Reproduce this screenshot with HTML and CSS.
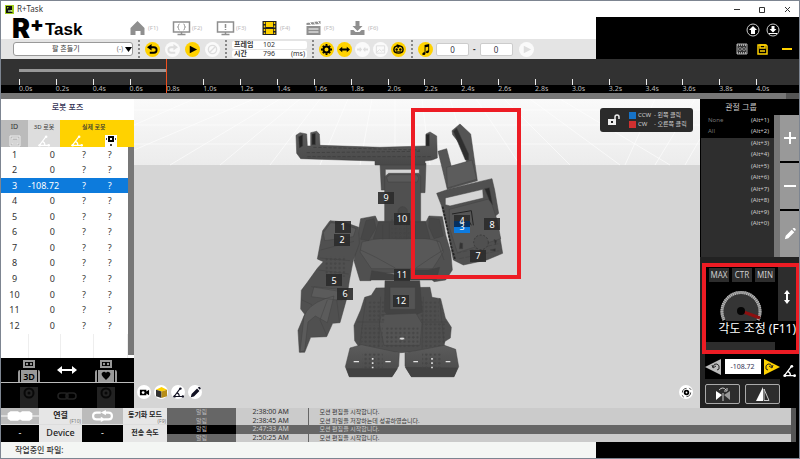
FILE: index.html
```html
<!DOCTYPE html>
<html lang="ko">
<head>
    <meta charset="UTF-8">
    <title>R+Task</title>
    <link rel="stylesheet" href="styles.css">
</head>
<body>
    <!-- shared icons -->
    <svg class="defs" width="0" height="0">
        <symbol id="i-angle" viewBox="0 0 14 14"><path d="M9.500 1.500L1.500 12H13M5 7.500Q8 8.500 8 12" fill="none" stroke="currentColor" stroke-width="1.400"/><circle cx="9.500" cy="2" r="1.500" fill="currentColor"/><circle cx="12.500" cy="12" r="1.500" fill="currentColor"/><circle cx="2" cy="12" r="1.500" fill="currentColor"/></symbol>
        <symbol id="i-pencil" viewBox="0 0 14 14"><path d="M1 13l1-4 7-7 3 3-7 7zM10 1l1-1q1-.5 2 .5t.500 2l-1 1z" fill="currentColor"/></symbol>
        <symbol id="i-robot" viewBox="0 0 24 22"><path d="M6 0h12v8H6zM1 12q0-2 2-2v12H1zM4 10h16v12H4zM21 10q2 0 2 2v10h-2z" fill="#999"/><path d="M8 2h8v4H8z" fill="#000"/><circle cx="10" cy="4" r="1.200" fill="#999"/><circle cx="14" cy="4" r="1.200" fill="#999"/></symbol>
        <symbol id="i-device" viewBox="0 0 18 22"><rect x="0" y="1" width="18" height="21" fill="#222"/><circle cx="9" cy="7" r="4.500" fill="#222" stroke="#080808" stroke-width="2"/><circle cx="9" cy="7" r="1.500" fill="#080808"/></symbol>
        <symbol id="i-gear" viewBox="0 0 12 12"><circle cx="6" cy="6" r="3.300" fill="none" stroke="currentColor" stroke-width="2.200"/><path d="M6 0v2M6 10v2M0 6h2M10 6h2M2 2l1 1M9 9l1 1M10 2L9 3M3 9l-1 1" stroke="currentColor" stroke-width="2"/></symbol>
        <symbol id="i-turn" viewBox="0 0 12 12"><path d="M3 3.500h4.500q3 0 3 3t-3 3H3" fill="none" stroke="currentColor" stroke-width="2"/><path d="M0 3.500L5 0v7z" fill="currentColor"/></symbol>
    </svg>

    <div class="titlebar">
        <svg class="app-icon" viewBox="0 0 9 9"><path d="M0 0h9v9H0z" fill="#a3cf1d"/><path d="M1 1h6v4L5 5l3 3H1zM2 2v2l2-2z" fill="#111"/><path d="M3 6h4" stroke="#dfd"/></svg>
        <span>R+Task</span>
        <div class="window-buttons">
            <button aria-label="Minimize"><svg viewBox="0 0 7 7"><path d="M0 3.500h6" stroke="#333"/></svg></button>
            <button aria-label="Maximize"><svg viewBox="0 0 7 7"><path d="M.5 1.500h5v5h-5z" fill="none" stroke="#333"/></svg></button>
            <button aria-label="Close"><svg viewBox="0 0 7 7"><path d="M1 1l5 5M6 1L1 6" stroke="#333"/></svg></button>
        </div>
    </div>

    <header class="header">
        <div class="header-main">
            <div class="menu">
                <h1 class="logo"><span class="logo-r">R</span><span class="logo-plus">+</span><span class="logo-task">Task</span></h1>
                <nav class="nav">
                    <button><svg viewBox="0 0 18 16"><path d="M9 1l7 7v7h-4v-4H7v4H2V8z" fill="#8f8f8f"/></svg>(F1)</button>
                    <button><svg viewBox="0 0 18 16"><path d="M1 2h16v10H1zM5 14.500h8M9 12v3" fill="none" stroke="#8f8f8f" stroke-width="1.500"/><path d="M7 4q-1 0-1 1.500T5 7q1 0 1 1.500T7 10M11 4q1 0 1 1.500T13 7q-1 0-1 1.500T11 10" fill="none" stroke="#8f8f8f"/></svg>(F2)</button>
                    <button><svg viewBox="0 0 18 16"><path d="M1 2h16v10H1zM5 14.500h8M9 12v3" fill="none" stroke="#8f8f8f" stroke-width="1.500"/><path d="M9 4v4M9 9v1" stroke="#8f8f8f" stroke-width="1.500"/></svg>(F3)</button>
                    <button><svg viewBox="0 0 18 16"><path d="M2 1h14v14H2z" fill="#222"/><path d="M5.500 2h7v5h-7zM5.500 9h7v5h-7z" fill="#ffd200"/><path d="M4 2v12M14 2v12" stroke="#ffd200" stroke-width="1.500" stroke-dasharray="2 1.500"/></svg>(F4)</button>
                    <button><svg viewBox="0 0 18 16"><path d="M2 3l14-2v3L2 5zM2 6h14v9H2z" fill="#8f8f8f"/><path d="M5 2l2 3M9 1.500l2 3M13 1l2 3M4 9h10M4 12h10" stroke="#fff"/></svg>(F5)</button>
                    <button><svg viewBox="0 0 18 16"><path d="M7 1h4v5h3l-5 5-5-5h3z" fill="#8f8f8f"/><path d="M2 10h3l2 2h4l2-2h3v5H2z" fill="#8f8f8f"/></svg>(F6)</button>
                </nav>
            </div>
            <div class="toolbar">
                <div class="motion">
                    <select aria-label="모션"><option>팔 흔들기</option></select>
                    <span class="motion-mark">(-)&nbsp;<svg viewBox="0 0 7 5"><path d="M0 0h7L3.500 5z"/></svg></span>
                </div>
                <i class="sep"></i>
                <div class="group wide">
                    <button class="round on" aria-label="Undo"><svg viewBox="0 0 12 12"><use href="#i-turn"/></svg></button>
                    <button class="round" aria-label="Redo"><svg class="flip" viewBox="0 0 12 12"><use href="#i-turn"/></svg></button>
                    <button class="round on" aria-label="Play"><svg viewBox="0 0 12 12"><path d="M3 2l8 4-8 4z"/></svg></button>
                    <button class="round" aria-label="Stop"><svg viewBox="0 0 12 12"><circle cx="6" cy="6" r="4.500" fill="none" stroke="#ddd" stroke-width="1.500"/><path d="M3 9l6-6" stroke="#ddd" stroke-width="1.500"/></svg></button>
                </div>
                <i class="sep"></i>
                <div class="frame-info">
                    <div><b>프레임</b><span>102</span></div>
                    <div><b>시간</b><span>796</span><span>(ms)</span></div>
                </div>
                <i class="sep"></i>
                <div class="group">
                    <button class="round on" aria-label="Settings"><svg viewBox="0 0 12 12"><use href="#i-gear"/></svg></button>
                    <button class="round on" aria-label="Stretch"><svg viewBox="0 0 12 12"><path d="M0 6l3.500-3v2h5V3L12 6 8.500 9V7h-5v2z"/></svg></button>
                    <button class="round" aria-label="Shrink"><svg viewBox="0 0 12 12"><path d="M0 5h3V3l2.500 3L3 9V7H0zM12 5H9V3L6.500 6 9 9V7h3z" fill="#ddd"/></svg></button>
                    <button class="round" aria-label="Image"><svg viewBox="0 0 12 12"><path d="M1.500 2h9v8h-9zM2 9l3-3 2 2 2-2 1 2" fill="none" stroke="#ddd"/></svg></button>
                    <button class="round on" aria-label="Robot"><svg viewBox="0 0 12 12"><path d="M1 6q0-4 5-4t5 4-5 4-5-4M4 1l3 1-2 2" fill="none" stroke="#000" stroke-width="1.500"/><circle cx="4" cy="6" r="1.300"/><circle cx="8" cy="6" r="1.300"/><path d="M3 8.500h6" stroke="#000"/></svg></button>
                </div>
                <i class="sep"></i>
                <div class="range">
                    <button class="round on" aria-label="Music"><svg viewBox="0 0 12 12"><path d="M5 1l5-1v8q0 2-2 2T6.500 8.500 9 7V3L6 3.500V10q0 2-2 2t-1.500-1.500T5 9z"/></svg></button>
                    <input type="text" value="0" aria-label="Start">
                    <b>-</b>
                    <input type="text" value="0" aria-label="End">
                    <button class="round" aria-label="Play music"><svg viewBox="0 0 12 12"><path d="M3 2l8 4-8 4z" fill="#ddd"/></svg></button>
                </div>
            </div>
        </div>
        <div class="header-side">
            <div>
                <button aria-label="Upload"><svg viewBox="0 0 14 14"><circle cx="7" cy="7" r="6" fill="none" stroke="#ccc"/><path d="M7 3l4 4H9v4H5V7H3z" fill="#fff"/></svg></button>
                <button aria-label="Download"><svg viewBox="0 0 14 14"><circle cx="7" cy="7" r="6" fill="none" stroke="#ccc"/><path d="M5.500 3h3v3h2L7 9.500 3.500 6h2zM3 10h8v1H3z" fill="#fff"/></svg></button>
            </div>
            <div class="save-row">
                <button aria-label="Export"><svg viewBox="0 0 14 14"><path d="M2 2h10v10H2z" fill="#333" stroke="#aaa"/><path d="M2 3h10M2 11h10" stroke="#aaa" stroke-width="2" stroke-dasharray="1 1"/><circle cx="5" cy="7" r="1.500" fill="none" stroke="#888"/><circle cx="9" cy="7" r="1.500" fill="none" stroke="#888"/></svg></button>
                <button aria-label="Save"><svg viewBox="0 0 14 14"><path d="M3 3h8l1 1v8H3z" fill="none" stroke="#ffd200" stroke-width="1.500"/><path d="M5 3h5v3H5zM5 9h5" stroke="#ffd200" stroke-width="1.500" fill="none"/></svg></button>
                <button aria-label="Collapse"><svg viewBox="0 0 14 14"><path d="M2 7h10" stroke="#ffd200" stroke-width="2"/></svg></button>
            </div>
        </div>
    </header>

    <section class="timeline">
        <div class="track"><div class="clip"></div></div>
        <ol class="ruler">
            <li>0.0s</li><li>0.2s</li><li>0.4s</li><li>0.6s</li><li class="now">0.8s</li><li>1.0s</li><li>1.2s</li>
            <li>1.4s</li><li>1.6s</li><li>1.8s</li><li>2.0s</li><li>2.2s</li><li>2.4s</li><li>2.6s</li>
            <li>2.8s</li><li>3.0s</li><li>3.2s</li><li>3.4s</li><li>3.6s</li><li>3.8s</li><li>4.0s</li>
        </ol>
        <div class="timeline-scroll"></div>
    </section>

    <main class="main">
        <section class="pose">
            <h2>로봇 포즈</h2>
            <div class="pose-body">
                <table class="pose-table">
                    <thead>
                        <tr><th class="c-id">ID</th><th class="c-3d">3D 로봇</th><th class="c-real" colspan="2">실제 로봇</th></tr>
                        <tr>
                            <th class="c-id"><svg viewBox="0 0 12 12"><path d="M1 1h10v10H1zM3 3h6v6H3zM5 5v3M7 5v3" fill="none" stroke="#eee"/></svg></th>
                            <th class="c-3d"><svg viewBox="0 0 14 14"><use href="#i-angle"/></svg></th>
                            <th class="c-real"><svg viewBox="0 0 14 14"><use href="#i-angle"/></svg></th>
                            <th class="c-real"><svg viewBox="0 0 12 12"><path d="M0 0h12v12H0z" fill="#fff"/><path d="M4 2h4v4H4z" fill="none" stroke="#000" stroke-width="2"/><path d="M1 4h1M10 4h1M5 10h2" stroke="#000" stroke-width="1.500"/></svg></th>
                        </tr>
                    </thead>
                    <tbody>
                        <tr><td>1</td><td>0</td><td>?</td><td>?</td></tr>
                        <tr><td>2</td><td>0</td><td>?</td><td>?</td></tr>
                        <tr class="selected"><td>3</td><td>-108.72</td><td>?</td><td>?</td></tr>
                        <tr><td>4</td><td>0</td><td>?</td><td>?</td></tr>
                        <tr><td>5</td><td>0</td><td>?</td><td>?</td></tr>
                        <tr><td>6</td><td>0</td><td>?</td><td>?</td></tr>
                        <tr><td>7</td><td>0</td><td>?</td><td>?</td></tr>
                        <tr><td>8</td><td>0</td><td>?</td><td>?</td></tr>
                        <tr><td>9</td><td>0</td><td>?</td><td>?</td></tr>
                        <tr><td>10</td><td>0</td><td>?</td><td>?</td></tr>
                        <tr><td>11</td><td>0</td><td>?</td><td>?</td></tr>
                        <tr><td>12</td><td>0</td><td>?</td><td>?</td></tr>
                        <tr class="blank"><td></td><td></td><td></td><td></td></tr>
                    </tbody>
                </table>
                <div class="pose-scroll"></div>
            </div>
            <div class="sync">
                <svg class="robot-icon" viewBox="0 0 24 22"><use href="#i-robot"/><text x="12" y="20" text-anchor="middle">3D</text></svg>
                <svg class="arrow-icon" viewBox="0 0 20 10"><path d="M0 5l5-4v3h10V1l5 4-5 4V6H5v3z" fill="#fff"/></svg>
                <svg class="robot-icon" viewBox="0 0 24 22"><use href="#i-robot"/><path d="M12 20q-7-6-3-8 2-1 3 1 1-2 3-1 4 2-3 8" fill="#000"/></svg>
            </div>
            <div class="sync">
                <svg class="robot-icon" viewBox="0 0 18 22"><use href="#i-device"/></svg>
                <svg class="arrow-icon" viewBox="0 0 20 10"><rect x="1" y="2" width="10" height="6" rx="3" fill="none" stroke="#222" stroke-width="1.500"/><rect x="9" y="2" width="10" height="6" rx="3" fill="none" stroke="#222" stroke-width="1.500"/></svg>
                <svg class="robot-icon" viewBox="0 0 18 22"><use href="#i-device"/></svg>
            </div>
        </section>

        <section class="scene">
            <svg class="scene-canvas" viewBox="134 99 566 309" preserveAspectRatio="xMidYMid slice">
                <defs>
                    <linearGradient id="sky" x2="0" y2="1"><stop offset="0" stop-color="#fafafa"/><stop offset="1" stop-color="#ececec"/></linearGradient>
                    <linearGradient id="steel" x2="0" y2="1"><stop offset="0" stop-color="#5c5c5c"/><stop offset="1" stop-color="#484848"/></linearGradient>
                    <pattern id="holes" width="13" height="13" patternUnits="userSpaceOnUse"><circle cx="6" cy="6" r="3" fill="#474747" stroke="#3a3a3a" stroke-width="1"/></pattern>
                </defs>
                <path d="M134 99h566v66H134z" fill="url(#sky)"/>
                <path d="M134 165h566v243H134z" fill="#d5d5d5"/>
                <path d="M134 125l60-26M134 150l120-51M170 165l110-66M220 165l80-66M270 165l50-66M320 165l28-66M360 165l12-66M395 165v-66M430 165l-8-66M470 165l-20-66M520 165l-44-66M570 165l-66-66M620 165l-90-66M670 165l-110-66M625 165l30-66M655 165l40-66M685 165l15-26M134 110h566M134 125h566M134 144h566" stroke="#fff" stroke-opacity=".6" fill="none"/>

                <!-- robot body, drawn at three times the size -->
                <g transform="translate(290 110) scale(.33333)" stroke="#414141" stroke-width="1.500" stroke-linejoin="round">
                    <!-- arm bracket and head -->
                    <path fill="#505050" d="M270 160h138l-3 88h-17v-70H286v62h-12z"/>
                    <path fill="url(#steel)" d="M18 76l12-8 20 4 2 36h10V68l18-4 8 8 2 34 180 6 138-4V72l12-6 20 12 2 66-16 6-21 3v12H255v-12L32 146l-12-16z"/>
                    <path fill="#252525" d="M26 80l12-6v34l-10 6zM66 72l10-2v34h-10zM408 74l10-2v36h-10z"/>
                    <path d="M50 128l340-4M52 140h370M70 112l320 8" fill="none" stroke="#333" stroke-dasharray="10 5"/>
                    <path fill="#505050" d="M284 200l12-10h90l6 10v140H284z"/>
                    <path fill="#5a5a5a" d="M290 202l10-8h80l6 10-4 12h-88z"/>
                    <!-- torso -->
                    <path fill="#505050" d="M212 326l44-8 7 16h146l8-16 40 2 10 55 15 50 5 55-20 30-35 5-25-25H260l-18 22h-32l-18-60 8-60z"/>
                    <path fill="#585858" d="M216 396q60-16 104-10h30q60-6 100 10l10 30-32 50H244l-34-50z"/>
                    <path fill="#474747" d="M228 332l24-6 6 28-22 38-24-4zM418 324l30 4 12 50-28 8-16-36zM266 336h140l14 50H250z"/>
                    <path fill="#424242" d="M245 482l76 12v-14h94l34-8-10 38H240z"/>
                    <path d="M278 344v44M298 340v46M350 340v46M376 344v42M212 420l42 20 62 34M460 420l-38 24-44 30M440 390l22 60" fill="none"/>
                    <circle cx="338" cy="304" r="14" fill="#484848"/>
                    <path fill="url(#holes)" stroke="none" d="M304 320h64v64h-64z"/>
                    <!-- left arm -->
                    <path fill="#505050" d="M98 362l22-30 42 4 44 16 2 50-18 48-12 62-8 54-20 72-22 2-18 40-48 2-18 45h-16l-4-66 20-48-12-16 2-56 18-24 30-42 18-20-18-8 8-42z"/>
                    <path fill="#5b5b5b" d="M100 368l22-30 36 4 40 14-8 24-86 12zM72 530l90 10-6 32-92-12zM42 620q10-34 64-54l26-8-20 80-36-20-22 18-10 86-14 4z"/>
                    <path d="M92 420l100-26M90 444l90 8M86 480l90 12M64 530l96 16M36 570l30 14M112 570l-22 60 20 46M140 568l8 66" fill="none"/>
                    <path fill="url(#holes)" stroke="none" d="M106 440h60v60h-60z"/>
                    <!-- raised right arm -->
                    <path fill="#555" d="M486 62l24-20 32 30 20 140-90 26-14-58-14-56 26-8 14 54 46-10-4-38-38-48z"/>
                    <path fill="#2f2f2f" d="M490 64l10-10 36 78v18h-10z"/>
                    <path fill="#5c5c5c" d="M470 172l76-22 14 58-88 26z"/>
                    <path fill="#505050" d="M440 250l40-14 126-30 8 34 12 70-14 12 18 60 8 48-48 20-70 15-30-15-18-90-18-74z"/>
                    <path fill="#565656" d="M478 298l122-32 22 66 10 54-130 42-24-76z"/>
                    <path fill="#d5d5d5" d="M466 264l112-26 2 26-100 24-14-4z"/>
                    <path fill="#292929" d="M584 236l14-3 10 52-10-14z"/>
                    <path d="M458 290l26 120 12 40" fill="none" stroke="#222" stroke-width="5" stroke-dasharray="7 4"/>
                    <path d="M486 312l58-10 6 44M530 320l14 26" fill="none" stroke="#222" stroke-width="3"/>
                    <path d="M500 430l130-30M508 446l120-24" fill="none" stroke-dasharray="14 5"/>
                    <circle cx="573" cy="397" r="22" fill="#505050" stroke="#303030" stroke-width="2" stroke-dasharray="6 5"/>
                    <path fill="#333" d="M510 398l8 2v16h-10zM612 388l8 4-4 12zM600 420l16-4v8z"/>
                    <!-- waist and legs -->
                    <path fill="#4e4e4e" d="M258 534l162-2 6 30 26 4 14 58 18 28-3 32-16 10-8 24-125 10-120-10-18-26-2-46 20-46 12-38 20-6z"/>
                    <path fill="#434343" d="M285 512h104l8 94-28 12h-74l-12-14z"/>
                    <path fill="#545454" d="M300 532h76v66h-76zM274 614l104-4 18 30-6 66H282l-14-66z"/>
                    <path fill="url(#holes)" stroke="none" d="M230 574h56v58h-56zM390 574h56v58h-56zM214 646h64v66h-64zM286 652h100v60H286zM398 640h68v74h-68z"/>
                    <path d="M228 564l-20 150M448 564l16 150M272 560l-6 150M400 560l-4 156M202 636h80M394 636h76" fill="none"/>
                    <ellipse cx="336" cy="686" rx="8" ry="4" fill="#ddd"/>
                    <!-- feet -->
                    <path fill="url(#steel)" d="M180 714l34-10 114 24-2 40-20 32H178l-12-30zM345 728l118-22 34 12 9 52-14 30H364l-19-32z"/>
                    <path fill="#424242" d="M170 776h152l-16 24H178zM346 772l156 2-10 26H364z"/>
                    <path fill="url(#holes)" stroke="none" d="M218 730h60v46h-60zM396 730h60v46h-60z"/>
                    <path d="M191 755h16M286 755h16M370 755h14M467 755h14" stroke="#e2e2e2" stroke-width="4"/>
                    <path d="M248 744v34M426 744v34" stroke="#e2e2e2" stroke-width="5" stroke-dasharray="5 8"/>
                </g>

                <!-- joint numbers -->
                <g class="joints">
                    <path d="M335 221h16v12h-16zM334 234h16v12h-16zM326 274h16v12h-16zM337 288h16v12h-16zM378 192h16v12h-16zM394 213h16v12h-16zM394 269h16v12h-16zM393 295h16v12h-16zM454 215h16v12h-16zM484 218h16v12h-16zM470 250h16v12h-16z" fill="#2b2b2b" fill-opacity=".9"/>
                    <path d="M454 221h16v6h-16z" fill="#06305f"/>
                    <path d="M454 227h16v6h-16z" fill="#0d7be0"/>
                    <text x="343" y="230">1</text><text x="342" y="243">2</text><text x="462" y="230">3</text><text x="462" y="224">4</text>
                    <text x="334" y="284">5</text><text x="345" y="297">6</text><text x="478" y="259">7</text><text x="492" y="228">8</text>
                    <text x="386" y="201">9</text><text x="402" y="222">10</text><text x="402" y="278">11</text><text x="401" y="304">12</text>
                </g>
                <rect x="413" y="110" width="106" height="167" fill="none" stroke="#ed1c24" stroke-width="4"/>
            </svg>
            <div class="legend">
                <svg viewBox="0 0 12 12"><path d="M0 5h8v6H0z" fill="#eee"/><path d="M7 5V3q0-2 2-2t2 2v2" fill="none" stroke="#eee" stroke-width="1.500"/><path d="M4 7v2" stroke="#222" stroke-width="2"/></svg>
                <ul>
                    <li><i class="ccw"></i><span>CCW</span>- 왼쪽 클릭</li>
                    <li><i class="cw"></i><span>CW</span>- 오른쪽 클릭</li>
                </ul>
            </div>
            <div class="scene-tools">
                <button aria-label="Camera"><svg viewBox="0 0 12 12"><path d="M1 3h7v6H1zM8 5l3-2v6L8 7z"/><circle cx="4.500" cy="6" r="1.500" fill="#fff"/></svg></button>
                <button aria-label="Cube"><svg viewBox="0 0 12 12"><path d="M0 3l6-3 6 3-6 2z" fill="#ffd200"/><path d="M0 3l6 2v7l-6-2z" fill="#333"/><path d="M12 3L6 5v7l6-2z" fill="#b68d18"/></svg></button>
                <button aria-label="Angle"><svg viewBox="0 0 14 14"><use href="#i-angle"/></svg></button>
                <button aria-label="Edit"><svg viewBox="0 0 14 14"><use href="#i-pencil"/></svg></button>
                <button class="last" aria-label="View"><svg viewBox="0 0 12 12"><circle cx="6" cy="6" r="2" fill="none" stroke="#000" stroke-width="2"/><path d="M1.500 6q0-4 4.500-4.500M10.500 6q0 4-4.500 4.500M9 1l2 2M1 9l2 2" fill="none" stroke="#333"/></svg></button>
            </div>
        </section>

        <aside class="side">
            <h2>관절 그룹</h2>
            <div class="joint-group">
                <ul class="joint-list">
                    <li class="used">None<span>(Alt+1)</span></li>
                    <li class="used">All<span>(Alt+2)</span></li>
                    <li><span>(Alt+3)</span></li>
                    <li><span>(Alt+4)</span></li>
                    <li><span>(Alt+5)</span></li>
                    <li><span>(Alt+6)</span></li>
                    <li><span>(Alt+7)</span></li>
                    <li><span>(Alt+8)</span></li>
                    <li><span>(Alt+9)</span></li>
                    <li><span>(Alt+0)</span></li>
                </ul>
                <div class="group-scroll"></div>
                <div class="group-buttons">
                    <button aria-label="Add"><svg viewBox="0 0 12 12"><path d="M6 0v12M0 6h12" stroke="#fff" stroke-width="2"/></svg></button>
                    <button aria-label="Remove"><svg viewBox="0 0 12 12"><path d="M0 6h12" stroke="#fff" stroke-width="2"/></svg></button>
                    <button aria-label="Edit group"><svg viewBox="0 0 14 14"><use href="#i-pencil"/></svg></button>
                </div>
            </div>
            <div class="control">
                <div class="dial-panel">
                    <div class="dial-left">
                        <div class="limits"><button>MAX</button><button>CTR</button><button>MIN</button></div>
                        <svg class="dial" viewBox="0 0 42 32">
                            <circle cx="21" cy="21" r="18" fill="#353535"/>
                            <path d="M4 30A19 19 0 1 1 38 30" fill="none" stroke="#777" stroke-width="3"/>
                            <path d="M4 30A19 19 0 1 1 38 30" fill="none" stroke="#bbb" stroke-width="3" stroke-dasharray="1 1"/>
                            <path d="M21 21l19 7" stroke="#8c1010" stroke-width="3"/>
                            <circle cx="21" cy="21" r="4" fill="#050505"/>
                        </svg>
                        <div class="bar"></div>
                    </div>
                    <button class="slide" aria-label="Range"><svg viewBox="0 0 8 14"><path d="M4 0l3 4H5v6h2l-3 4-3-4h2V4H1z" fill="#fff"/></svg></button>
                    <div class="tip">각도 조정 (F11)</div>
                </div>
                <div class="adjust">
                    <div class="adjust-left">
                        <div class="stepper">
                            <button aria-label="Rotate left"><svg viewBox="0 0 16 16"><path d="M0 8l16-8v16z" fill="#bbb"/><path d="M8 8q1-4 4-3t2 5l-2 1M7 6l1 3 3-2" fill="none" stroke="#222"/></svg></button>
                            <input type="text" value="-108.72" aria-label="각도">
                            <button aria-label="Rotate right"><svg viewBox="0 0 16 16"><path d="M0 0l16 8-16 8z" fill="#ffd200"/><path d="M8 8q-1-4-4-3t-2 5l2 1M9 6L8 9 5 7" fill="none" stroke="#222"/></svg></button>
                        </div>
                        <div class="mirrors">
                            <button aria-label="Mirror"><svg viewBox="0 0 16 14"><path d="M1 4l6 4-6 5z" fill="#fff"/><path d="M15 4L9 8l6 5z" fill="#999"/><path d="M4 3q4-4 7 0M8 6v8M12 1v3H9" fill="none" stroke="#ccc"/></svg></button>
                            <button aria-label="Flip"><svg viewBox="0 0 16 14"><path d="M8 0v14H1z" fill="#fff"/><path d="M9 2l5 11.500H9z" fill="none" stroke="#ccc"/></svg></button>
                        </div>
                    </div>
                    <svg class="adjust-icon" viewBox="0 0 14 14"><use href="#i-angle"/></svg>
                </div>
            </div>
        </aside>
    </main>

    <section class="bottom">
        <div class="status">
            <div class="pic"><svg viewBox="0 0 40 12"><path d="M0 6h40" stroke="#fff"/><path d="M7 3l3-2h8l1 1h2l1-1h8l3 2v6l-3 2h-8l-1-1h-2l-1 1h-8L7 9z" fill="#fff"/></svg></div>
            <button>연결<small>(F10)</small></button>
            <div class="pic"><svg viewBox="0 0 40 14"><path d="M18 3h-5q-4 0-4 4t4 4h6M23 3h4q4 0 4 4t-4 4h-5" fill="none" stroke="#fff" stroke-width="2.500"/><path d="M24 0v6l-6-3zM18 8v6l6-3z" fill="#fff"/></svg></div>
            <button class="small">동기화 모드<small>(F9)</small></button>
            <div class="value">-</div>
            <div class="name">Device</div>
            <div class="value">-</div>
            <div class="name small">전송 속도</div>
        </div>
        <table class="log">
            <tr><td>알림</td><td>2:38:00 AM</td><td>모션 편집을 시작합니다.</td></tr>
            <tr><td>알림</td><td>2:38:45 AM</td><td>모션 파일을 저장하는데 성공하였습니다.</td></tr>
            <tr class="active"><td>알림</td><td>2:47:33 AM</td><td>모션 편집을 시작합니다.</td></tr>
            <tr><td>알림</td><td>2:50:25 AM</td><td>모션 편집을 시작합니다.</td></tr>
        </table>
        <div class="log-scroll"></div>
    </section>

    <footer class="footer"><span>작업중인 파일:</span></footer>
</body>
</html>
```
FILE: styles.css
```css
* {
    box-sizing: border-box;
}
body {
    margin: 0;
    min-height: 100vh;
    display: flex;
    flex-direction: column;
    border: 1px solid #7d8591;
    background-color: #000;
    color: #333;
    font-family: "Noto Sans", "Noto Sans CJK KR", sans-serif;
    font-size: 8px;
    line-height: 10px;
}
h1, h2, ul, ol {
    margin: 0;
    padding: 0;
    list-style: none;
}
button, input, select {
    margin: 0;
    padding: 0;
    border: 0;
    background: none;
    color: inherit;
    font: inherit;
}
svg {
    display: block;
    flex: none;
}
.defs {
    position: absolute;
}

/* title bar */
.titlebar {
    display: flex;
    align-items: center;
    height: 16px;
    padding: 0 8px 0 4px;
    gap: 3px;
    background-color: #fff;
}
.app-icon {
    width: 9px;
    height: 9px;
}
.window-buttons {
    display: flex;
    gap: 18px;
    margin-left: auto;
}
.window-buttons svg {
    width: 7px;
    height: 7px;
}

/* header */
.header {
    display: flex;
    height: 42px;
}
.header-main {
    flex: 1;
    background-color: #fff;
}
.menu {
    display: flex;
    height: 22px;
}
.logo {
    display: flex;
    width: 127px;
    padding-left: 11px;
    color: #000;
    font-family: "Liberation Sans", Arial, sans-serif;
    font-size: 17px;
    line-height: 26px;
}
.logo-r {
    font-family: Inter, sans-serif;
    font-size: 27px;
    font-weight: 900;
    line-height: 24px;
}
.logo-plus {
    font-family: Inter, sans-serif;
    font-size: 20px;
    font-weight: 900;
    line-height: 14px;
}
.logo-task {
    padding-left: 1px;
}
.nav {
    display: flex;
}
.nav button {
    display: flex;
    align-items: center;
    gap: 1px;
    width: 44px;
    color: #bbb;
    font-size: 6px;
}
.nav svg {
    width: 19px;
    height: 16px;
}
.toolbar {
    display: flex;
    align-items: center;
    height: 20px;
    padding-left: 12px;
    background-color: #e4e4e4;
}
.motion {
    position: relative;
    width: 120px;
}
.motion select {
    appearance: none;
    width: 100%;
    height: 14px;
    padding-left: 38px;
    border: 1px solid #999;
    border-radius: 3px;
    background-color: #fff;
    font-size: 7px;
    line-height: 12px;
}
.motion-mark {
    position: absolute;
    top: 2px;
    right: 1px;
    display: flex;
    align-items: center;
    color: #777;
    font-size: 7px;
    pointer-events: none;
}
.motion-mark svg {
    width: 7px;
    height: 5px;
}
.sep {
    height: 18px;
    margin: 0 5px;
    border-left: 2px dotted #888;
}
.group {
    display: flex;
    gap: 3px;
}
.wide {
    gap: 5px;
}
.round {
    display: flex;
    align-items: center;
    justify-content: center;
    width: 15px;
    height: 15px;
    border-radius: 50%;
    background-color: #fafafa;
    color: #ddd;
}
.on {
    background-color: #ffd200;
    color: #000;
}
.round svg {
    width: 11px;
    height: 11px;
}
.flip {
    transform: scaleX(-1);
}
.frame-info {
    width: 75px;
    font-size: 7px;
}
.frame-info div {
    display: flex;
    height: 8px;
    padding: 0 2px;
    border-radius: 2px;
    background-color: #fff;
    line-height: 8px;
}
.frame-info div + div {
    margin-top: 1px;
}
.frame-info b {
    width: 29px;
    font-size: 7px;
}
.frame-info span + span {
    margin-left: auto;
}
.range {
    display: flex;
    align-items: center;
    gap: 3px;
}
.range input {
    width: 33px;
    height: 13px;
    border: 1px solid #ccc;
    border-radius: 2px;
    background-color: #fff;
    color: #334;
    text-align: center;
}
.range b {
    padding: 0 1px;
}
.range .round:last-child {
    margin-left: 3px;
}
.header-side {
    display: flex;
    flex-direction: column;
    gap: 5px;
    width: 203px;
    padding: 6px 5px 0 0;
}
.header-side div {
    display: flex;
    justify-content: flex-end;
    gap: 6px;
    padding-right: 14px;
}
.header-side .save-row {
    padding-right: 0;
}
.save-row button:last-child {
    margin-left: 5px;
}
.header-side svg {
    width: 14px;
    height: 14px;
}

/* timeline */
.timeline {
    background-color: #323232;
}
.track {
    height: 20px;
    padding: 10px 7px 0 18px;
}
.clip {
    width: 19%;
    height: 3px;
    background-color: #999;
}
.ruler {
    display: flex;
    height: 14px;
    padding: 0 6px 0 18px;
    background: linear-gradient(#323232 6px, #000 6px);
    color: #bbb;
    font-size: 7px;
    line-height: 7px;
}
.ruler li {
    position: relative;
    flex: 1;
    padding-top: 6px;
}
.ruler li::before {
    content: "";
    position: absolute;
    left: 0;
    top: 0;
    width: 1px;
    height: 6px;
    background-color: #eee;
}
.ruler .now::before {
    top: -20px;
    height: 34px;
    background-color: #f0501e;
}
.timeline-scroll {
    height: 6px;
    border-right: 13px solid #555;
    background-color: #777;
}

/* main area */
.main {
    display: flex;
    flex: 1;
}
.pose {
    display: flex;
    flex-direction: column;
    width: 133px;
    background-color: #fff;
}
.pose h2 {
    height: 21px;
    color: #335;
    font-size: 8px;
    font-weight: 500;
    line-height: 15px;
    text-align: center;
}
.pose-body {
    display: flex;
    flex: 1;
    background: linear-gradient(#ffd200 27px, #fff 27px);
}
.pose-table {
    width: 127px;
    border-collapse: collapse;
    table-layout: fixed;
    font-size: 9px;
    line-height: 12px;
    text-align: center;
}
.pose-table th {
    height: 14px;
    padding: 0;
    font-size: 7px;
    font-weight: 400;
}
.pose-table tr + tr th {
    height: 13px;
}
.pose-table th svg {
    width: 12px;
    height: 12px;
    margin: 0 auto;
    color: #fff;
}
.pose-table .c-id {
    width: 27px;
    background-color: #bbb;
}
.pose-table .c-3d {
    width: 32px;
    background-color: #ddd;
    font-size: 6px;
}
.pose-table .c-real {
    background-color: #ffd200;
    font-size: 6px;
    font-weight: 500;
}
.pose-table td {
    height: 15px;
    padding: 0;
}
.pose-table tr:nth-child(even) td {
    height: 16px;
}
.pose-table td:nth-child(2) {
    padding-right: 5px;
    direction: rtl;
    unicode-bidi: plaintext;
    text-align: right;
    white-space: nowrap;
}
.pose-table td:nth-child(3) {
    padding-left: 14px;
}
.pose-table td:nth-child(4) {
    padding-right: 2px;
}
.pose-table .selected {
    background-color: #0d7bdc;
    color: #fff;
}
.pose-table .blank td {
    height: 24px;
    border-right: 1px solid #eee;
}
.pose-scroll {
    width: 6px;
    margin: 27px 0 3px;
    background-color: #777;
}
.sync {
    display: flex;
    align-items: flex-end;
    justify-content: space-around;
    height: 25px;
    padding: 0 8px;
    background-color: #000;
    border-bottom: 1px solid #bbb;
}
.sync:last-child {
    border-bottom: 0;
}
.sync text {
    font: 9px "Noto Sans", sans-serif;
    font-weight: 600;
}
.robot-icon {
    width: 24px;
    height: 22px;
}
.arrow-icon {
    width: 20px;
    height: 10px;
    margin-bottom: 7px;
}

/* 3D scene */
.scene {
    position: relative;
    display: flex;
    flex: 1;
    align-items: flex-end;
    background-color: #d5d5d5;
}
.scene-canvas {
    position: absolute;
    inset: 0;
    width: 100%;
    height: 100%;
}
.joints text {
    fill: #fff;
    font-size: 9px;
    text-anchor: middle;
}
.legend {
    position: absolute;
    top: 9px;
    right: 7px;
    display: flex;
    align-items: center;
    gap: 9px;
    width: 93px;
    height: 24px;
    padding-left: 8px;
    border-radius: 3px;
    background-color: #2b2b2b;
    color: #ccc;
    font-size: 6px;
    line-height: 9px;
    white-space: nowrap;
}
.legend svg {
    width: 12px;
    height: 12px;
}
.legend i {
    display: inline-block;
    width: 7px;
    height: 7px;
    margin-right: 2px;
    vertical-align: middle;
}
.legend span {
    display: inline-block;
    width: 16px;
}
.ccw {
    background-color: #1673c8;
}
.cw {
    background-color: #cf3030;
}
.scene-tools {
    position: relative;
    display: flex;
    gap: 3px;
    width: 100%;
    padding: 0 7px 9px 3px;
}
.scene-tools button {
    display: flex;
    align-items: center;
    justify-content: center;
    width: 14px;
    height: 14px;
    border-radius: 50%;
    background-color: #fff;
    color: #112;
}
.scene-tools .last {
    margin-left: auto;
}
.scene-tools svg {
    width: 11px;
    height: 11px;
}

/* right panel */
.side {
    display: flex;
    flex-direction: column;
    width: 99px;
    background-color: #000;
    color: #ccc;
}
.side h2 {
    height: 16px;
    padding-right: 17px;
    font-size: 8px;
    font-weight: 400;
    line-height: 15px;
    text-align: center;
}
.joint-group {
    display: flex;
    height: 142px;
}
.joint-list {
    flex: 1;
    margin-left: 1px;
    background-color: #2e2e2e;
    font-size: 6px;
    line-height: 11px;
}
.joint-list li {
    display: flex;
    justify-content: space-between;
    height: 11px;
    padding: 0 5px 0 7px;
}
.joint-list li:nth-child(even) {
    height: 12px;
}
.joint-list span {
    margin-left: auto;
}
.joint-list .used {
    background-color: #000;
    color: #777;
}
.joint-list .used span {
    color: #ccc;
}
.group-scroll {
    width: 6px;
    background-color: #777;
}
.group-buttons {
    display: flex;
    flex-direction: column;
    gap: 2px;
    width: 19px;
}
.group-buttons button {
    display: flex;
    flex: 1;
    align-items: center;
    justify-content: center;
    background-color: #999;
    color: #fff;
}
.group-buttons svg {
    width: 12px;
    height: 12px;
}
.control {
    flex: 1;
    padding-top: 6px;
    background-color: #222;
}
.dial-panel {
    position: relative;
    display: flex;
    justify-content: space-between;
    height: 91px;
    margin-left: 2px;
    border: 4px solid #ed1c24;
    border-right-width: 3px;
    background-color: #000;
}
.limits {
    display: flex;
    gap: 3px;
    padding: 1px 0 0 3px;
}
.limits button {
    width: 20px;
    height: 14px;
    background-color: #2d2d2d;
    font-size: 8px;
}
.dial {
    width: 42px;
    height: 32px;
    margin: 8px 0 0 14px;
}
.tip {
    position: absolute;
    right: 0;
    bottom: 13px;
    color: #fff;
    background-color: #000;
    font-size: 12px;
    line-height: 16px;
    white-space: nowrap;
}
.bar {
    height: 8px;
    margin-top: 20px;
    background-color: #2d2d2d;
}
.slide {
    display: flex;
    align-items: center;
    justify-content: center;
    width: 18px;
    height: 60px;
    background-color: #2d2d2d;
}
.slide svg {
    width: 8px;
    height: 14px;
}
.adjust {
    display: flex;
    height: 54px;
}
.adjust-left {
    width: 80px;
    padding-left: 5px;
}
.stepper {
    display: flex;
    align-items: center;
    justify-content: space-between;
    height: 25px;
    margin-bottom: 5px;
    background-color: #000;
}
.stepper svg {
    width: 16px;
    height: 16px;
}
.stepper input {
    width: 36px;
    height: 15px;
    background-color: #fff;
    color: #335;
    font-size: 7px;
    text-align: center;
}
.mirrors {
    display: flex;
    gap: 5px;
}
.mirrors button {
    display: flex;
    flex: 1;
    align-items: center;
    justify-content: center;
    height: 20px;
    border: 1px solid #aaa;
    border-radius: 2px;
    background-color: #2d2d2d;
}
.mirrors svg {
    width: 16px;
    height: 14px;
}
.adjust-icon {
    width: 19px;
    height: 54px;
    padding: 0 3px 20px;
    background-color: #000;
    color: #fff;
}

/* status and log */
.bottom {
    display: flex;
    height: 34px;
    padding-right: 3px;
}
.status {
    display: grid;
    grid-template-columns: 38px 43px 41px 44px;
    grid-template-rows: 16px 17px;
    row-gap: 1px;
    background-color: #ddd;
    color: #222;
    font-size: 9px;
    text-align: center;
    line-height: 16px;
}
.status button {
    position: relative;
    padding-bottom: 3px;
    background-color: #e6e6e6;
    font-size: 8px;
    font-weight: 700;
    line-height: 12px;
}
.status small {
    position: absolute;
    right: 1px;
    bottom: 0;
    color: #777;
    font-size: 5px;
    font-weight: 400;
    line-height: 5px;
}
.name {
    background-color: #e6e6e6;
    font-weight: 500;
}
.status .small {
    font-size: 7px;
    font-weight: 700;
}
.pic {
    display: flex;
    align-items: center;
    background-color: #bbb;
}
.pic svg {
    width: 100%;
    height: 12px;
}
.value {
    background-color: #000;
    color: #fff;
}
.log {
    flex: 1;
    height: 34px;
    border-collapse: collapse;
    table-layout: fixed;
    background-color: #cbcbcb;
    font-size: 7px;
    line-height: 8px;
}
.log td {
    height: 8px;
    padding: 0;
    overflow: hidden;
}
.log td:first-child {
    width: 69px;
    background-color: #666;
    color: #bbb;
    font-size: 6px;
    text-align: center;
}
.log td:nth-child(2) {
    width: 72px;
    padding-right: 2px;
    border-right: 1px solid #666;
    text-align: center;
}
.log td:last-child {
    padding-left: 11px;
    font-size: 6px;
}
.log .active {
    background-color: #666;
    color: #ccc;
}
.log .active td:first-child {
    background-color: #000;
}
.log-scroll {
    width: 5px;
    background-color: #555;
}
.footer {
    height: 16px;
    margin-right: 203px;
    padding-left: 14px;
    background-color: #f4f6f4;
    font-size: 8px;
    font-weight: 500;
    line-height: 15px;
}
```
